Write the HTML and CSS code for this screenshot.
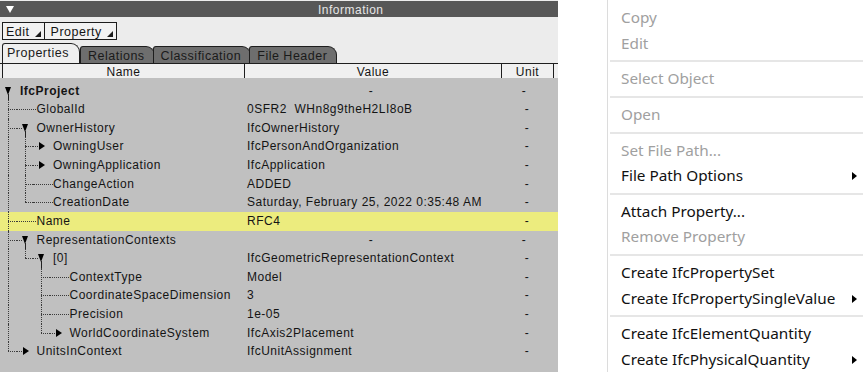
FILE: index.html
```html
<!DOCTYPE html>
<html lang="en">
<head>
    <meta charset="UTF-8">
    <title>Information</title>
    <link rel="stylesheet" href="styles.css">
</head>
<body>
    <div class="panel">
        <div class="titlebar">
            <span class="collapse"></span>
            <span class="title">Information</span>
        </div>

        <div class="toolbar">
            <span class="dropbtn">Edit</span>
            <span class="dropbtn">Property</span>
        </div>

        <div class="tabs">
            <span class="tab active">Properties</span>
            <span class="tab">Relations</span>
            <span class="tab">Classification</span>
            <span class="tab">File Header</span>
        </div>

        <div class="colhead">
            <span class="c-name">Name</span>
            <span class="c-value">Value</span>
            <span class="c-unit">Unit</span>
        </div>

        <div class="tree">
            <div class="row">
                <div class="name"><span class="slot open root"><b></b></span><span class="label bold">IfcProject</span></div>
                <div class="value center">-</div><div class="unit">-</div>
            </div>
            <div class="row">
                <div class="name"><i class="g t"></i><span class="slot leaf"></span><span class="label">GlobalId</span></div>
                <div class="value">0SFR2&nbsp;&nbsp;WHn8g9theH2LI8oB</div><div class="unit">-</div>
            </div>
            <div class="row">
                <div class="name"><i class="g t"></i><span class="slot open"><b></b></span><span class="label">OwnerHistory</span></div>
                <div class="value">IfcOwnerHistory</div><div class="unit">-</div>
            </div>
            <div class="row">
                <div class="name"><i class="g v"></i><i class="g t"></i><span class="slot closed"><b></b></span><span class="label">OwningUser</span></div>
                <div class="value">IfcPersonAndOrganization</div><div class="unit">-</div>
            </div>
            <div class="row">
                <div class="name"><i class="g v"></i><i class="g t"></i><span class="slot closed"><b></b></span><span class="label">OwningApplication</span></div>
                <div class="value">IfcApplication</div><div class="unit">-</div>
            </div>
            <div class="row">
                <div class="name"><i class="g v"></i><i class="g t"></i><span class="slot leaf"></span><span class="label">ChangeAction</span></div>
                <div class="value">ADDED</div><div class="unit">-</div>
            </div>
            <div class="row">
                <div class="name"><i class="g v"></i><i class="g l"></i><span class="slot leaf"></span><span class="label">CreationDate</span></div>
                <div class="value">Saturday, February 25, 2022 0:35:48 AM</div><div class="unit">-</div>
            </div>
            <div class="row selected">
                <div class="name"><i class="g t"></i><span class="slot leaf"></span><span class="label">Name</span></div>
                <div class="value">RFC4</div><div class="unit">-</div>
            </div>
            <div class="row">
                <div class="name"><i class="g t"></i><span class="slot open"><b></b></span><span class="label">RepresentationContexts</span></div>
                <div class="value center">-</div><div class="unit">-</div>
            </div>
            <div class="row">
                <div class="name"><i class="g v"></i><i class="g l"></i><span class="slot open"><b></b></span><span class="label">[0]</span></div>
                <div class="value">IfcGeometricRepresentationContext</div><div class="unit">-</div>
            </div>
            <div class="row">
                <div class="name"><i class="g v"></i><i class="g"></i><i class="g t"></i><span class="slot leaf"></span><span class="label">ContextType</span></div>
                <div class="value">Model</div><div class="unit">-</div>
            </div>
            <div class="row">
                <div class="name"><i class="g v"></i><i class="g"></i><i class="g t"></i><span class="slot leaf"></span><span class="label">CoordinateSpaceDimension</span></div>
                <div class="value">3</div><div class="unit">-</div>
            </div>
            <div class="row">
                <div class="name"><i class="g v"></i><i class="g"></i><i class="g t"></i><span class="slot leaf"></span><span class="label">Precision</span></div>
                <div class="value">1e-05</div><div class="unit">-</div>
            </div>
            <div class="row">
                <div class="name"><i class="g v"></i><i class="g"></i><i class="g l"></i><span class="slot closed"><b></b></span><span class="label">WorldCoordinateSystem</span></div>
                <div class="value">IfcAxis2Placement</div><div class="unit">-</div>
            </div>
            <div class="row">
                <div class="name"><i class="g l"></i><span class="slot closed"><b></b></span><span class="label">UnitsInContext</span></div>
                <div class="value">IfcUnitAssignment</div><div class="unit">-</div>
            </div>
        </div>
    </div>

    <div class="menu">
        <div class="item disabled">Copy</div>
        <div class="item disabled">Edit</div>
        <div class="sep"></div>
        <div class="item disabled">Select Object</div>
        <div class="sep"></div>
        <div class="item disabled">Open</div>
        <div class="sep"></div>
        <div class="item disabled">Set File Path...</div>
        <div class="item sub">File Path Options</div>
        <div class="sep"></div>
        <div class="item">Attach Property...</div>
        <div class="item disabled">Remove Property</div>
        <div class="sep"></div>
        <div class="item">Create IfcPropertySet</div>
        <div class="item sub">Create IfcPropertySingleValue</div>
        <div class="sep"></div>
        <div class="item">Create IfcElementQuantity</div>
        <div class="item sub">Create IfcPhysicalQuantity</div>
    </div>
</body>
</html>
```

FILE: styles.css
```css
body {
    margin: 0;
    height: 372px;
    overflow: hidden;
    background: #fff;
    display: flex;
}

/* left: information panel */
.panel {
    width: 558px;
    flex: none;
    display: flex;
    flex-direction: column;
    background: #ececec;
    font-family: "Liberation Sans", Arial, sans-serif;
    font-size: 12px;
    letter-spacing: 0.5px;
    color: #141414;
}
.titlebar {
    height: 16px;
    margin-top: 1px;
    background: #575757;
    display: flex;
    align-items: center;
    color: #e6e6e6;
}
.collapse {
    margin-left: 6px;
    border-left: 4px solid transparent;
    border-right: 4px solid transparent;
    border-top: 7px solid #fff;
}
.title {
    margin-left: 304px;
    padding-top: 1px;
}
.toolbar {
    display: flex;
    padding: 5px 0 0 2px;
    height: 20px;
}
.dropbtn {
    position: relative;
    height: 16px;
    line-height: 18px;
    border: 1px solid #1c1c1c;
    padding: 0 14px 0 3px;
    background: #f2f2f2;
    font-size: 12.5px;
}
.dropbtn + .dropbtn {
    border-left: none;
    padding-left: 6px;
}
.dropbtn::after {
    content: '';
    position: absolute;
    right: 3px;
    bottom: 2px;
    border-left: 6px solid transparent;
    border-bottom: 6px solid #1c1c1c;
}
.tabs {
    display: flex;
    align-items: flex-end;
    padding-left: 2px;
    height: 21px;
    border-bottom: 1px solid #1e1e1e;
}
.tab {
    height: 16px;
    line-height: 18px;
    padding: 0 9px 0 7px;
    margin-right: -2px;
    background: #6e6e6e;
    color: #1a1a1a;
    border: 1px solid #1e1e1e;
    border-bottom: none;
    border-radius: 3px 9px 0 0;
    font-size: 12.5px;
}
.tab.active {
    height: 19px;
    line-height: 18px;
    background: #efefef;
    padding: 0 10px 0 4px;
    margin-right: 0;
    position: relative;
    z-index: 1;
}
.colhead {
    display: flex;
    height: 14px;
    line-height: 16px;
    margin-left: 2px;
    background: #f0f0f0;
}
.colhead span {
    text-align: center;
    border-right: 1px solid #1e1e1e;
}
.colhead .c-name {
    width: 241px;
    border-left: 1px solid #1e1e1e;
}
.colhead .c-value { width: 256px; }
.colhead .c-unit { width: 51px; }

.tree {
    flex: 1;
    background: #c0c0c0;
    padding-top: 3.5px;
}
.row {
    display: flex;
    height: 18.64px;
    line-height: 18px;
}
.row.selected {
    background: #ecec7e;
}
.name {
    width: 244px;
    display: flex;
    align-items: stretch;
    white-space: nowrap;
}
.value {
    width: 254px;
    padding-left: 3px;
    white-space: nowrap;
}
.value.center {
    text-align: center;
    padding-left: 0;
}
.unit {
    width: 52px;
    text-align: center;
}
.label {
    margin-left: 3.5px;
}
.bold {
    font-weight: bold;
}

/* tree connector lines */
.g, .slot {
    width: 16.5px;
    flex: none;
    position: relative;
}
.g.v::before, .g.t::before {
    content: '';
    position: absolute;
    left: 8px;
    top: 0;
    bottom: 0;
    border-left: 1px dotted #3a3a3a;
}
.g.l::before {
    content: '';
    position: absolute;
    left: 8px;
    top: 0;
    height: 9px;
    border-left: 1px dotted #3a3a3a;
}
.g.t::after, .g.l::after {
    content: '';
    position: absolute;
    left: 8px;
    right: 0;
    top: 9px;
    border-top: 1px dotted #3a3a3a;
}
.slot.leaf::before {
    content: '';
    position: absolute;
    left: 0;
    right: -3px;
    top: 9px;
    border-top: 1px dotted #3a3a3a;
}
.slot.open::before, .slot.closed::before {
    content: '';
    position: absolute;
    left: 0;
    width: 5px;
    top: 9px;
    border-top: 1px dotted #3a3a3a;
}
.slot.root::before {
    display: none;
}
.slot.open::after {
    content: '';
    position: absolute;
    left: 8px;
    top: 12px;
    bottom: 0;
    border-left: 1px solid #222;
}
.slot b {
    position: absolute;
}
.slot.open b {
    left: 5px;
    top: 5px;
    border-left: 3px solid transparent;
    border-right: 3px solid transparent;
    border-top: 8px solid #000;
}
.slot.closed b {
    left: 6px;
    top: 5px;
    border-top: 4px solid transparent;
    border-bottom: 4px solid transparent;
    border-left: 6px solid #000;
}

/* right: context menu */
.menu {
    margin-left: 49px;
    flex: 1;
    border-left: 1px solid #dcdcdc;
    background: #fff;
    padding-top: 5.2px;
    font-family: "Noto Sans", "Open Sans", sans-serif;
    font-size: 15.3px;
    color: #111;
}
.item {
    position: relative;
    height: 25.6px;
    line-height: 25.6px;
    padding-left: 13px;
}
.item.disabled {
    color: #a0a0a0;
}
.item.sub::after {
    content: '';
    position: absolute;
    right: 6px;
    top: 9px;
    border-top: 4px solid transparent;
    border-bottom: 4px solid transparent;
    border-left: 5px solid #000;
}
.sep {
    height: 10px;
    margin-left: 2px;
    position: relative;
}
.sep::before {
    content: '';
    position: absolute;
    left: 0;
    right: 0;
    top: 4px;
    border-top: 2px solid #e6e6e6;
}
```
